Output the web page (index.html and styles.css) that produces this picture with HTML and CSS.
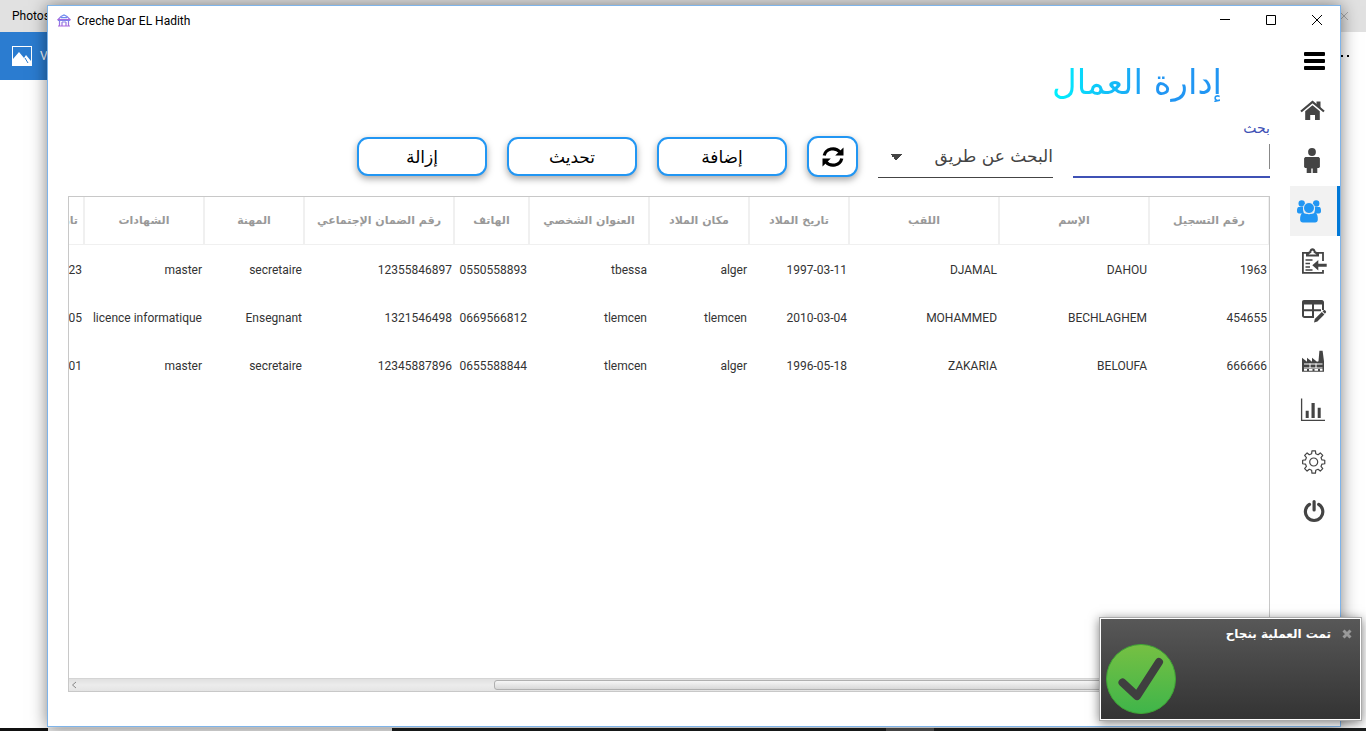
FILE: index.html
```html
<!DOCTYPE html>
<html lang="ar">
<head>
<meta charset="utf-8">
<title>Creche Dar EL Hadith</title>
<link rel="stylesheet" href="styles.css">
</head>
<body>
<div class="desktop">
  <div class="photos">
    <div class="photos-title"><span>Photos</span><svg class="photos-close" viewBox="0 0 10 10"><path d="M1 1l8 8M9 1L1 9"/></svg></div>
    <div class="photos-bar">
      <div class="photos-tools">
        <svg class="photos-icon" viewBox="0 0 20 20"><path d="M0 0h20v20H0z" fill="#fff"/><path d="M1 1h18v14l-5-6-2 3-5-6-6 7z" fill="#2b7cd0"/><path d="M13 12l3 5" stroke="#2b7cd0"/></svg>
        <span>View all photos</span>
      </div>
      <svg class="photos-more" viewBox="0 0 16 4"><path d="M1 1h2v2H1zM7 1h2v2H7zM13 1h2v2h-2z"/></svg>
    </div>
  </div>
  <div class="taskbar"><span class="task-start"></span><span class="task-search"></span><span class="task-middle"></span><span class="task-app"></span><span class="task-end"></span></div>

  <div class="window">
    <header class="titlebar">
      <svg class="logo" viewBox="0 0 14 14"><defs><linearGradient id="lg" x1="0" y1="0" x2="0" y2="1"><stop offset="0" stop-color="#6a8ff0"/><stop offset="1" stop-color="#a868dc"/></linearGradient></defs><g fill="none" stroke="url(#lg)" stroke-width="1.200"><path d="M1 5.600L4 2.500 7 1l3 1.500 3 3.100z"/><path d="M1 6.500h12M2.500 6v5.500M5 8v3.500M9 8v3.500M11.500 6v5.500M5 8h4M1 12h12M4 3.600h6"/></g></svg>
      <span class="app-name">Creche Dar EL Hadith</span>
      <div class="win-controls">
        <button aria-label="Minimize"><svg viewBox="0 0 12 12"><path d="M1 5.500h10"/></svg></button>
        <button aria-label="Maximize"><svg viewBox="0 0 12 12"><path d="M1.500 1.500h9v9h-9z"/></svg></button>
        <button aria-label="Close"><svg viewBox="0 0 12 12"><path d="M1 1l10 10M11 1L1 11"/></svg></button>
      </div>
    </header>
    <div class="body" dir="rtl">
      <nav class="sidebar">
        <button aria-label="القائمة"><svg viewBox="0 0 50 50"><path fill="#000" d="M14.500 16h20l.5 1v2l-.5 1h-20l-.5-1v-2zM14.500 23h20l.5 1v2l-.5 1h-20l-.5-1v-2zM14.500 30h20l.5 1v2l-.5 1h-20l-.5-1v-2z"/></svg></button>
        <button aria-label="الرئيسية"><svg viewBox="0 0 50 50"><path d="M11 25.500L22.500 16 34 25.500" fill="none" stroke="#444" stroke-width="2.200"/><path d="M26.500 15.500h4v7l-4-3.300zM15.200 25.200l7.300-6 7.300 6V34H25v-5h-4.800v5h-5z"/></svg></button>
        <button aria-label="الأطفال"><svg viewBox="0 0 50 50"><circle cx="22" cy="16" r="3.900"/><path d="M15.300 21h13.400l1.200 1.200V31l-1 1h-1.600v5h-4.600v-4.500h-1.400V37h-4.600v-5h-1.600l-1-1v-8.800z"/></svg></button>
        <button class="active" aria-label="العمال" aria-current="page"><svg viewBox="0 0 50 50"><circle cx="11.700" cy="17.500" r="3.200"/><circle cx="26.200" cy="17.500" r="3.200"/><path d="M8.500 21h6l-1.500 2 .8 4.500H9c-1.500 0-2-1-2-2.500 0-2 .3-3.500 1.500-4zM29.500 21h-6l1.500 2-.8 4.500H29c1.500 0 2-1 2-2.500 0-2-.3-3.500-1.500-4z"/><path d="M13 26.500c3 2.300 9 2.300 12 0 2.300 1 3 4 2.800 7 0 2-1 3-2.800 3H13c-1.800 0-2.900-1-2.900-3 0-3 .6-6 2.900-7z"/><circle cx="19" cy="22" r="5.500" stroke="#f2f2f2"/></svg></button>
        <button aria-label="التسجيل"><svg viewBox="0 0 50 50"><path d="M33 25v-8.200H12.900v20H33V34" fill="none" stroke="#444" stroke-width="1.800"/><path d="M16 20.500v-3.200l3.500-2c.3-4 5.700-4 6 0l3.500 2v3.200z"/><path d="M18.500 18.500h8l-3-2a1.200 1.200 0 1 0-2 0z" fill="#fff"/><path d="M15.500 24h7M15.500 27.500h4.500M15.500 31h4.500M15.500 34h7" stroke="#444" stroke-width="1.300"/><path d="M22.300 29.300l6-5.200v3.700h8.400v3h-8.400v3.700z"/></svg></button>
        <button aria-label="الأقسام"><svg viewBox="0 0 50 50"><path d="M33 24v-7.500a1.500 1.500 0 0 0-1.500-1.500h-17A1.500 1.500 0 0 0 13 16.500v13a1.500 1.500 0 0 0 1.500 1.500H24M13 17h20M13 24.200h18M23 17v14" fill="none" stroke="#444" stroke-width="2"/><path d="M12.500 14.500h20v4h-20zM24 36.500l.8-3.500 7-7 2.600 2.600-7 7zM32.500 25.300l1.200-1a1 1 0 0 1 1.400 0l.8.900a1 1 0 0 1 0 1.300l-1 1.200z"/></svg></button>
        <button aria-label="المصنع"><svg viewBox="0 0 50 50"><path d="M12 35.700v-14l5 4v-4l5 4v-4l5 4 1.500-.5.900-10.400h3.200l1.400 10.500v10.400z"/><path d="M14 28h18.500M14 32h18.500" stroke="#fff" stroke-width="1.200"/><path d="M14 33.800h3M19 33.800h3.500M24.500 33.800H28M30 33.800h2.500" stroke="#fff" stroke-width="1.800"/><path d="M20 27.500V32M26 27.500V32" stroke="#fff"/></svg></button>
        <button aria-label="الإحصائيات"><svg viewBox="0 0 50 50"><path d="M11.600 12.500v21.900H35" fill="none" stroke="#444" stroke-width="1.300"/><path d="M15.700 24.700h3V32h-3zM21.500 17h3.200v15h-3.200zM27.700 21.700h3V32h-3z"/></svg></button>
        <button aria-label="الإعدادات"><svg viewBox="0 0 50 50"><g transform="translate(23.700 26)" fill="none" stroke="#444" stroke-width="1.200" stroke-linejoin="round"><circle r="4"/><path d="M8.250-2.060L11.060-1.750V1.750L8.250 2.060 7.290 4.380 9.060 6.580 6.580 9.060 4.380 7.290 2.060 8.250 1.750 11.060H-1.750L-2.060 8.250-4.380 7.290-6.580 9.060-9.060 6.580-7.290 4.380-8.250 2.060-11.060 1.750V-1.750L-8.250-2.060-7.290-4.380-9.060-6.580-6.580-9.060-4.380-7.290-2.060-8.250-1.750-11.060H1.750L2.060-8.250 4.380-7.290 6.580-9.060 9.060-6.580 7.290-4.380z"/></g></svg></button>
        <button aria-label="خروج"><svg viewBox="0 0 50 50"><path d="M19.500 18.400a8.700 8.700 0 1 0 9.200 0M24.100 15.500V24" fill="none" stroke="#444" stroke-width="3.200" stroke-linecap="round"/></svg></button>
      </nav>
      <main class="content">
        <h1><span>إدارة العمال</span></h1>
        <div class="toolbar">
          <div class="search">
            <label for="q">بحث</label>
            <div class="search-line"><input id="q" type="text"></div>
          </div>
          <select class="search-by" aria-label="البحث عن طريق"><option>البحث عن طريق</option></select>
          <div class="actions">
            <button class="refresh" aria-label="تحديث القائمة"><svg viewBox="0 0 22 22"><g fill="none" stroke="#000" stroke-width="3.200"><path d="M2.200 9.500A9 8.500 0 0 1 18 6"/><path d="M19.800 12.500A9 8.500 0 0 1 4 16"/></g><path d="M21.500 1.500v8h-8.300zM.5 20.500v-8h8.300z"/></svg></button>
            <button>إضافة</button>
            <button>تحديث</button>
            <button>إزالة</button>
          </div>
        </div>
        <div class="grid">
          <div class="grid-view">
            <table>
              <colgroup><col class="w120"><col class="w150"><col class="w150"><col class="w100"><col class="w100"><col class="w120"><col class="w75"><col class="w150"><col class="w100"><col class="w120"><col class="w100"></colgroup>
              <thead><tr><th>رقم التسجيل</th><th>الإسم</th><th>اللقب</th><th>تاريخ الملاد</th><th>مكان الملاد</th><th>العنوان الشخصي</th><th>الهاتف</th><th>رقم الضمان الإجتماعي</th><th>المهنة</th><th>الشهادات</th><th class="start">تاريخ</th></tr></thead>
              <tbody>
                <tr><td>1963</td><td>DAHOU</td><td>DJAMAL</td><td>1997-03-11</td><td>alger</td><td>tbessa</td><td>0550558893</td><td>12355846897</td><td>secretaire</td><td>master</td><td>23</td></tr>
                <tr><td>454655</td><td>BECHLAGHEM</td><td>MOHAMMED</td><td>2010-03-04</td><td>tlemcen</td><td>tlemcen</td><td>0669566812</td><td>1321546498</td><td>Ensegnant</td><td>licence informatique</td><td>05</td></tr>
                <tr><td>666666</td><td>BELOUFA</td><td>ZAKARIA</td><td>1996-05-18</td><td>alger</td><td>tlemcen</td><td>0655588844</td><td>12345887896</td><td>secretaire</td><td>master</td><td>01</td></tr>
              </tbody>
            </table>
          </div>
          <div class="scrollbar">
            <svg viewBox="0 0 6 8"><path d="M1 1l4 3-4 3"/></svg>
            <div class="track"><div class="thumb"></div></div>
            <svg viewBox="0 0 6 8"><path d="M5 1L1.500 4 5 7"/></svg>
          </div>
        </div>
      </main>
    </div>
  </div>

  <div class="toast" role="status" dir="rtl">
    <button aria-label="إغلاق"><svg viewBox="0 0 10 10"><path d="M1.500 1.500l7 7M8.500 1.500l-7 7"/></svg></button>
    <p>تمت العملية بنجاح</p>
    <svg class="check" viewBox="0 0 70 70"><defs><linearGradient id="ok" x1="0" y1="0" x2="0" y2="1"><stop offset="0" stop-color="#76c043"/><stop offset="1" stop-color="#3fb54a"/></linearGradient></defs><circle cx="35" cy="35" r="34.500" fill="url(#ok)" stroke="#3fa535"/><path d="M16.500 38.500L31 52 53 18" fill="none" stroke="#3f3f3f" stroke-width="8" stroke-linecap="round" stroke-linejoin="round"/></svg>
  </div>
</div>
</body>
</html>
```
FILE: styles.css
```css
* { box-sizing: border-box; }
body { margin: 0; font-family: Roboto, "DejaVu Sans", sans-serif; font-size: 12px; }
button { font: inherit; border: 0; padding: 0; background: none; cursor: pointer; }
svg { display: block; }

.desktop { position: relative; height: 100vh; display: flex; flex-direction: column; overflow: hidden; background: #fff; }

/* window behind */
.photos { flex: 1; }
.photos-title { display: flex; align-items: center; justify-content: space-between; height: 32px; padding: 0 17px 0 12px; background: #e1e1e1; }
.photos-close { width: 10px; height: 10px; stroke: #aaa; fill: none; }
.photos-bar { display: flex; align-items: center; justify-content: space-between; height: 48px; padding-right: 16px; }
.photos-tools { display: flex; align-items: center; gap: 8px; align-self: stretch; padding: 0 12px; background: #2b7cd0; color: #fff; }
.photos-icon { width: 20px; height: 20px; }
.photos-more { width: 16px; height: 4px; }
.taskbar { display: flex; height: 3px; background: #1c1e1e; }
.task-start { width: 48px; background: #111; }
.task-search { width: 344px; background: #f2f2f2; }
.task-middle { flex: 8 1 0; }
.task-end { flex: 7 1 0; }
.task-app { width: 48px; background: #555; }

/* application window */
.window { position: absolute; inset: 5px 25px 4px 47px; display: flex; flex-direction: column; border: 1px solid #7eb4ea; background: #fff; box-shadow: 0 1px 16px rgba(0, 0, 0, .5); }
.titlebar { display: flex; align-items: center; gap: 6px; height: 30px; padding-left: 9px; }
.logo { width: 14px; height: 14px; }
.app-name { flex: 1; }
.win-controls { display: flex; align-self: flex-start; }
.win-controls button { width: 46px; height: 28px; display: grid; place-items: center; }
.win-controls svg { width: 12px; height: 12px; fill: none; stroke: #000; }
.body { flex: 1; display: flex; min-height: 0; }

.sidebar { width: 50px; display: flex; flex-direction: column; }
.sidebar button { height: 50px; fill: #444; }
.sidebar svg { width: 50px; height: 50px; }
.sidebar .active { background: #f2f2f2; box-shadow: inset -3px 0 #0078d7; fill: #2196f3; }

.content { flex: 1; min-width: 0; display: flex; flex-direction: column; padding: 20px 20px 34px; }
h1 { margin: 0; padding: 0 48px; font: 400 34px/52px "DejaVu Sans", sans-serif; }
h1 span { background: linear-gradient(to left, #2196f3 40%, #00f2fe); -webkit-background-clip: text; background-clip: text; color: transparent; }

.toolbar { display: flex; align-items: flex-end; gap: 20px; height: 70px; }
.search { width: 197px; color: #3f51b5; }
.search label { display: block; font: 14px/20px "DejaVu Sans", sans-serif; }
.search-line { padding: 6px 0 7px; border-bottom: 2px solid #3f51b5; }
.search input { display: block; width: 100%; height: 25px; padding: 0 4px; border: 0; border-right: 1px solid #888; outline: 0; font: inherit; }
.search-by { width: 175px; height: 42px; padding: 0 0 1px; border: 0; border-bottom: 1px solid #444; border-radius: 0; appearance: none; color: #444; font: 17px "DejaVu Sans", sans-serif; background: linear-gradient(to bottom right, #444 50%, transparent 50%) 18px 18px / 6px 6px no-repeat, linear-gradient(to bottom left, #444 50%, transparent 50%) 12px 18px / 6px 6px no-repeat, #fff; }
.actions { display: flex; align-items: center; gap: 20px; padding-bottom: 1px; }
.actions button { width: 130px; height: 39px; border: 2px solid #2196f3; border-radius: 11px; background: #fff; box-shadow: 0 3px 7px rgba(0, 0, 0, .35); color: #000; font: 17px "DejaVu Sans", sans-serif; }
.actions .refresh { display: grid; place-items: center; width: 51px; height: 41px; }
.refresh svg { width: 22px; height: 22px; }

.grid { flex: 1; min-height: 0; display: flex; flex-direction: column; margin-top: 18px; border: 1px solid #c8c8c8; }
.grid-view { flex: 1; min-height: 0; overflow: hidden; }
table { width: 1285px; table-layout: fixed; border-collapse: separate; border-spacing: 0; }
.w75 { width: 75px; }
.w100 { width: 100px; }
.w120 { width: 120px; }
.w150 { width: 150px; }
th { height: 48px; padding: 0; border: solid #f0f0f0; border-width: 0 1px 1px; color: #999; font: bold 11px "DejaVu Sans", sans-serif; white-space: nowrap; }
th.start { padding-right: 5px; text-align: right; }
td { height: 48px; padding: 2px 2px 0; color: #333; text-align: right; white-space: nowrap; }
.scrollbar { display: flex; align-items: center; height: 13px; padding: 0 2px; gap: 10px; border-top: 1px solid #d4d4d4; background: linear-gradient(#e0e0e0, #ececec 50%, #e4e4e4); }
.scrollbar svg { width: 6px; height: 8px; fill: none; stroke: #888; }
.track { flex: 1; }
.thumb { width: 65%; height: 10px; border: 1px solid #b0b0b0; border-radius: 3px; background: linear-gradient(#f6f6f6, #d8d8d8); }

/* notification */
.toast { position: absolute; right: 4px; bottom: 10px; width: 263px; height: 104px; display: grid; grid-template-columns: 12px 1fr; grid-template-rows: 21px 1fr; column-gap: 10px; padding: 5px 8px 5px 6px; border: 1px solid #aaa; background: linear-gradient(#585858, #333); box-shadow: inset 0 0 0 1px #fff, 0 2px 10px rgba(0, 0, 0, .5); color: #fff; }
.toast button { display: grid; place-items: center; }
.toast button svg { width: 10px; height: 10px; fill: none; stroke: #999; stroke-width: 3; }
.toast p { margin: 0; font: bold 12px/22px "DejaVu Sans", sans-serif; }
.check { grid-column: 2; justify-self: end; width: 70px; height: 70px; }
```
